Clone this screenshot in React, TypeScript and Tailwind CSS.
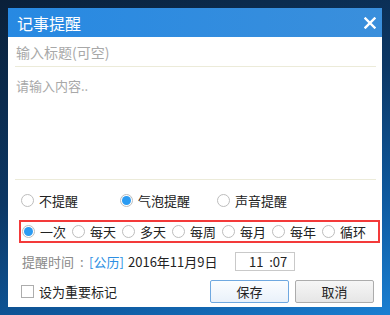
import React from "react";

const font = { fontFamily: '"Noto Sans CJK SC", "Noto Sans", sans-serif' };

const Radio = ({ checked }: { checked?: boolean }) => (
  <span className="w-[13px] h-[13px] rounded-full border border-[#bdbdbd] bg-white flex items-center justify-center shrink-0">
    {checked && <span className="w-[9px] h-[9px] rounded-full bg-[#2b9bf2]" />}
  </span>
);

const RadioItem = ({
  label,
  checked,
  width,
}: {
  label: string;
  checked?: boolean;
  width: string;
}) => (
  <div className={`flex items-center gap-[5px] ${width}`}>
    <Radio checked={checked} />
    <span className="text-[13px] text-[#222] leading-none">{label}</span>
  </div>
);

const repeats = ["一次", "每天", "多天", "每周", "每月", "每年", "循环"];

export default function App() {
  return (
    <div
      className="w-[390px] h-[315px] p-[8px] bg-[linear-gradient(160deg,#0a2039_0%,#0c3764_45%,#0e5aa0_75%,#1a7fd2_100%)]"
      style={font}
    >
      <div className="w-[374px] h-[299px] bg-white flex flex-col">
        <div className="h-[29px] bg-[linear-gradient(90deg,#2789e2,#3a8fdc)] flex items-center justify-between pl-[9px] pr-[6px]">
          <span className="text-white text-[16px] leading-none">记事提醒</span>
          <svg width="12" height="12" viewBox="0 0 12 12">
            <path d="M1.5 1.5 L10.5 10.5 M10.5 1.5 L1.5 10.5" stroke="white" strokeWidth="2.4" strokeLinecap="square" />
          </svg>
        </div>

        <div className="mx-[7px] mr-[6px] h-[30px] border-b border-[#ecebd9] flex items-center pl-[1px]">
          <span className="text-[14px] text-[#a8a8a8] leading-none">输入标题(可空)</span>
        </div>

        <div className="mx-[7px] mr-[6px] h-[113px] border-b border-[#ecebd9] pt-[5px] pl-[1px]">
          <span className="text-[13px] text-[#a8a8a8] leading-none">请输入内容..</span>
        </div>

        <div className="h-[40px] flex items-center pl-[13px]">
          <RadioItem label="不提醒" width="w-[99px]" />
          <RadioItem label="气泡提醒" checked width="w-[97px]" />
          <RadioItem label="声音提醒" width="w-[100px]" />
        </div>

        <div className="ml-[11px] mr-[2px] h-[23px] border-2 border-[#f33a3a] flex items-center pl-[1px]">
          {repeats.map((r, i) => (
            <RadioItem key={r} label={r} checked={i === 0} width="w-[50px]" />
          ))}
        </div>

        <div className="h-[36px] flex items-center pl-[14px] text-[13px] leading-none">
          <span className="text-[#8a8a8a] w-[67px] flex">
            提醒时间<span className="ml-[6px]">:</span>
          </span>
          <span className="text-[#2d8fe3] w-[39px]">[公历]</span>
          <span className="text-[#222] w-[107px]">2016年11月9日</span>
          <div className="w-[60px] h-[19px] border border-[#c9c9c9] flex items-center pl-[13px] text-[13px] text-[#222]">
            11&nbsp;&nbsp;:07
          </div>
        </div>

        <div className="flex items-center pl-[13px] pr-[8px] mt-[1px]">
          <span className="w-[13px] h-[13px] border border-[#adadad] bg-white" />
          <span className="ml-[5px] text-[13px] text-[#222] leading-none">设为重要标记</span>
          <div className="ml-auto flex gap-[6px]">
            <button className="w-[79px] h-[23px] border border-[#6fa8e0] rounded-[2px] bg-[linear-gradient(#fbfdff,#e9f1fa)] text-[13px] text-[#222]">
              保存
            </button>
            <button className="w-[79px] h-[23px] border border-[#acacac] rounded-[2px] bg-[linear-gradient(#f6f6f6,#e6e6e6)] text-[13px] text-[#222]">
              取消
            </button>
          </div>
        </div>
      </div>
    </div>
  );
}
